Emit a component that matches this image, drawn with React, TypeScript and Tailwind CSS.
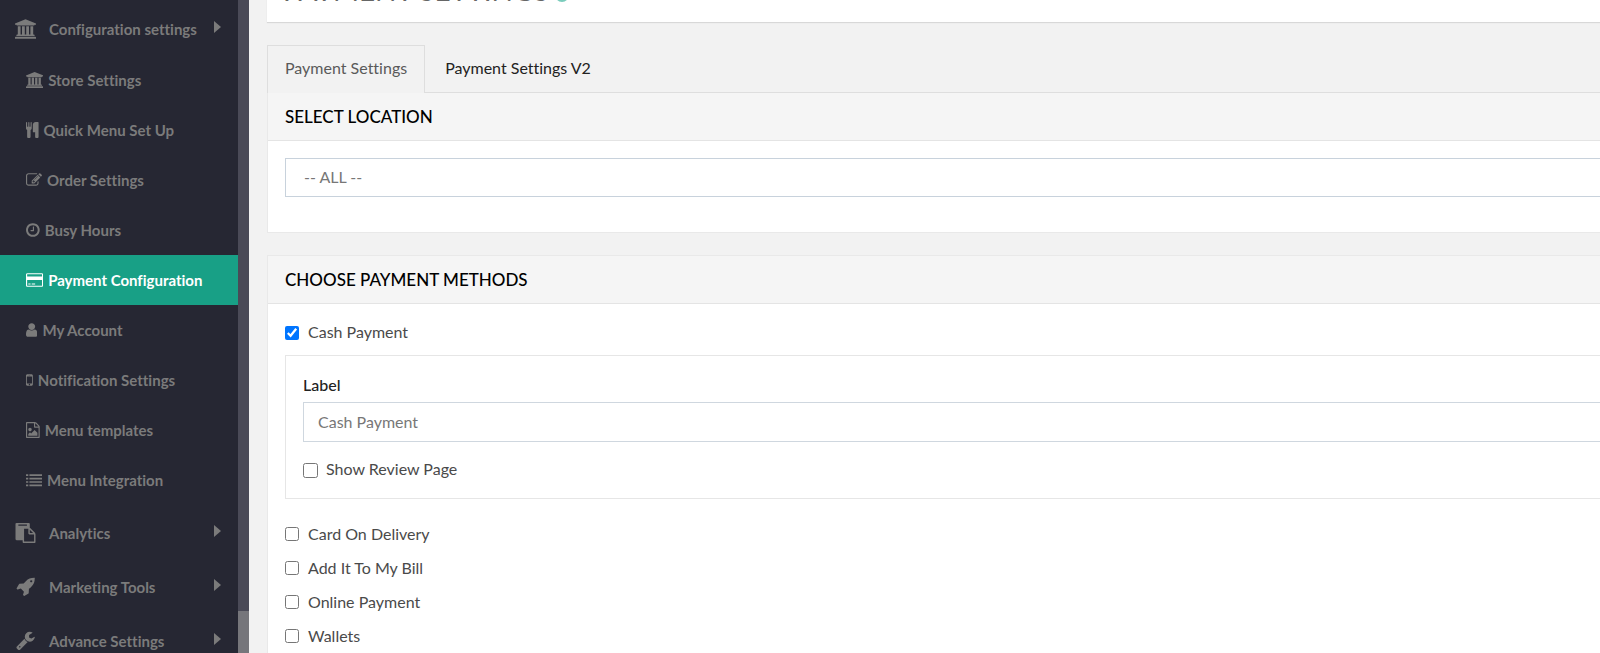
import { useState, type ReactNode } from 'react'

type IconProps = { box: string; d: string; className?: string }

function Icon({ box, d, className }: IconProps) {
  return (
    <svg xmlns="http://www.w3.org/2000/svg" viewBox={box} className={className} fill="currentColor" aria-hidden="true">
      <path d={d} />
    </svg>
  )
}

const BANK = {
  box: '0 0 1920 1792',
  d: 'M960 0l960 384v128h-128q0 26-20.5 45t-48.5 19h-1526q-28 0-48.5-19t-20.5-45h-128v-128zm-704 640h256v768h128v-768h256v768h128v-768h256v768h128v-768h256v768h59q28 0 48.5 19t20.5 45v64h-1664v-64q0-26 20.5-45t48.5-19h59v-768zm1595 960q28 0 48.5 19t20.5 45v128h-1920v-128q0-26 20.5-45t48.5-19h1782z',
}

const SUB_ITEMS = [
  { label: 'Store Settings', icon: BANK },
  {
    label: 'Quick Menu Set Up',
    icon: {
      box: '192 0 1408 1792',
      d: 'M832 64v640q0 61-35.5 111t-92.5 70v779q0 52-38 90t-90 38h-128q-52 0-90-38t-38-90v-779q-57-20-92.5-70t-35.5-111v-640q0-26 19-45t45-19 45 19 19 45v416q0 26 19 45t45 19 45-19 19-45v-416q0-26 19-45t45-19 45 19 19 45v416q0 26 19 45t45 19 45-19 19-45v-416q0-26 19-45t45-19 45 19 19 45zm768 0v1600q0 52-38 90t-90 38h-128q-52 0-90-38t-38-90v-512h-224q-13 0-22.5-9.5t-9.5-22.5v-800q0-132 94-226t226-94h256q26 0 45 19t19 45z',
    },
  },
  {
    label: 'Order Settings',
    icon: {
      box: '0 0 1792 1792',
      d: 'M888 1184l116-116-152-152-116 116v56h96v96h56zm440-720q-16-16-33 1l-350 350q-17 17-1 33t33-1l350-350q17-17 1-33zm80 594v190q0 119-84.5 203.5t-203.5 84.5h-832q-119 0-203.5-84.5t-84.5-203.5v-832q0-119 84.5-203.5t203.5-84.5h832q63 0 117 25 15 7 18 23 3 17-9 29l-49 49q-14 14-32 8-23-6-45-6h-832q-66 0-113 47t-47 113v832q0 66 47 113t113 47h832q66 0 113-47t47-113v-126q0-13 9-22l64-64q15-15 35-7t20 29zm-96-738l288 288-672 672h-288v-288zm444 132l-92 92-288-288 92-92q28-28 68-28t68 28l152 152q28 28 28 68t-28 68z',
    },
  },
  {
    label: 'Busy Hours',
    icon: {
      box: '128 0 1536 1792',
      d: 'M1024 544v448q0 14-9 23t-23 9h-320q-14 0-23-9t-9-23v-64q0-14 9-23t23-9h224v-352q0-14 9-23t23-9h64q14 0 23 9t9 23zm416 352q0-148-73-273t-198-198-273-73-273 73-198 198-73 273 73 273 198 198 273 73 273-73 198-198 73-273zm224 0q0 209-103 385.5t-279.5 279.5-385.5 103-385.5-103-279.5-279.5-103-385.5 103-385.5 279.5-279.5 385.5-103 385.5 103 279.5 279.5 103 385.5z',
    },
  },
  {
    label: 'Payment Configuration',
    active: true,
    icon: {
      box: '0 0 1920 1792',
      d: 'M1760 128q66 0 113 47t47 113v1216q0 66-47 113t-113 47h-1600q-66 0-113-47t-47-113v-1216q0-66 47-113t113-47h1600zm-1600 128q-13 0-22.5 9.5t-9.5 22.5v224h1664v-224q0-13-9.5-22.5t-22.5-9.5h-1600zm1600 1280q13 0 22.5-9.5t9.5-22.5v-608h-1664v608q0 13 9.5 22.5t22.5 9.5h1600zm-1504-128v-128h256v128h-256zm384 0v-128h384v128h-384z',
    },
  },
  {
    label: 'My Account',
    icon: {
      box: '256 0 1280 1792',
      d: 'M1536 1399q0 109-62.5 187t-150.5 78h-854q-88 0-150.5-78t-62.5-187q0-85 8.5-160.5t31.5-152 58.5-131 94-89 134.5-34.5q131 128 313 128t313-128q76 0 134.5 34.5t94 89 58.5 131 31.5 152 8.5 160.5zm-256-887q0 159-112.5 271.5t-271.5 112.5-271.5-112.5-112.5-271.5 112.5-271.5 271.5-112.5 271.5 112.5 112.5 271.5z',
    },
  },
  {
    label: 'Notification Settings',
    icon: {
      box: '512 0 768 1792',
      d: 'M976 1408q0-33-23.5-56.5t-56.5-23.5-56.5 23.5-23.5 56.5 23.5 56.5 56.5 23.5 56.5-23.5 23.5-56.5zm208-160v-704q0-13-9.5-22.5t-22.5-9.5h-512q-13 0-22.5 9.5t-9.5 22.5v704q0 13 9.5 22.5t22.5 9.5h512q13 0 22.5-9.5t9.5-22.5zm-192-848q0-16-16-16h-160q-16 0-16 16t16 16h160q16 0 16-16zm288-16v1024q0 52-38 90t-90 38h-512q-52 0-90-38t-38-90v-1024q0-52 38-90t90-38h512q52 0 90 38t38 90z',
    },
  },
  {
    label: 'Menu templates',
    icon: {
      box: '128 0 1536 1792',
      d: 'M1596 380q28 28 48 76t20 88v1152q0 40-28 68t-68 28h-1344q-40 0-68-28t-28-68v-1600q0-40 28-68t68-28h896q40 0 88 20t76 48zm-444-244v376h376q-10-29-22-41l-313-313q-12-12-41-22zm384 1528v-1024h-416q-40 0-68-28t-28-68v-416h-768v1536h1280zm-128-448v320h-1024v-192l192-192 128 128 384-384zm-832-192q-80 0-136-56t-56-136 56-136 136-56 136 56 56 136-56 136-136 56z',
    },
  },
  {
    label: 'Menu Integration',
    icon: {
      box: '0 0 1792 1792',
      d: 'M0 256h256v192H0zM0 640h256v192H0zM0 1024h256v192H0zM0 1408h256v192H0zM384 256h1408v192H384zM384 640h1408v192H384zM384 1024h1408v192H384zM384 1408h1408v192H384z',
    },
  },
]

const BOTTOM_ITEMS = [
  {
    label: 'Analytics',
    icon: {
      box: '0 0 1792 1792',
      d: 'M768 1664h896v-640h-416q-40 0-68-28t-28-68v-416h-384v1152zm256-1440v-64q0-13-9.5-22.5t-22.5-9.5h-704q-13 0-22.5 9.5t-9.5 22.5v64q0 13 9.5 22.5t22.5 9.5h704q13 0 22.5-9.5t9.5-22.5zm256 672h299l-299-299v299zm512 128v672q0 40-28 68t-68 28h-960q-40 0-68-28t-28-68v-160h-544q-40 0-68-28t-28-68v-1344q0-40 28-68t68-28h1088q40 0 68 28t28 68v328q21 13 36 28l408 408q28 28 48 76t20 88z',
    },
  },
  {
    label: 'Marketing Tools',
    icon: {
      box: '-64 64 1792 1792',
      d: 'M1440 448q0-40-28-68t-68-28-68 28-28 68 28 68 68 28 68-28 28-68zm224-288q0 249-75.5 430.5t-253.5 360.5q-81 80-195 176l-20 379q-2 16-16 26l-384 224q-7 4-16 4-12 0-23-9l-64-64q-13-14-8-32l85-276-281-281-276 85q-3 1-9 1-14 0-23-9l-64-64q-17-19-5-39l224-384q10-14 26-16l379-20q96-114 176-195 188-187 358-258t431-71q14 0 24 9.5t10 22.5z',
    },
  },
  {
    label: 'Advance Settings',
    icon: {
      box: '0 64 1792 1792',
      d: 'M448 1472q0-26-19-45t-45-19-45 19-19 45 19 45 45 19 45-19 19-45zm644-420l-682 682q-37 37-90 37-52 0-91-37l-106-108q-38-36-38-90 0-53 38-91l681-681q39 98 114.5 173.5t173.5 114.5zm634-435q0 39-23 106-47 134-164.5 217.5t-258.5 83.5q-185 0-316.5-131.5t-131.5-316.5 131.5-316.5 316.5-131.5q58 0 121.5 16.5t107.5 46.5q16 11 16 28t-16 28l-293 169v224l193 107q5-3 79-48.5t135.5-81 70.5-35.5q15 0 23.5 10t8.5 25z',
    },
  },
]

const METHODS = ['Card On Delivery', 'Add It To My Bill', 'Online Payment', 'Wallets']

function ParentItem({ label, icon }: { label: string; icon: { box: string; d: string } }) {
  return (
    <a href="#" className="flex h-[54px] items-center pt-[2px] pl-[15px] pr-[17px]">
      <Icon {...icon} className="h-5 w-[21px] shrink-0" />
      <span className="ml-[13px] flex-1">{label}</span>
      <svg viewBox="0 0 7 12" className="mb-1 h-3 w-[7px]" fill="currentColor" aria-hidden="true">
        <path d="M0 0l7 6-7 6z" />
      </svg>
    </a>
  )
}

function Panel({ title, className, children }: { title: string; className: string; children: ReactNode }) {
  return (
    <section className={`border-l border-[#e9e9e9] bg-white ${className}`}>
      <h2 className="h-12 border-b border-[#e4e4e4] bg-[#f5f5f5] pl-[17px] text-[17px] leading-[48px] font-medium text-black">{title}</h2>
      {children}
    </section>
  )
}

export default function App() {
  const [cash, setCash] = useState(true)

  return (
    <div className="flex h-screen overflow-hidden bg-[#f2f2f2] font-['Lato',sans-serif] text-base text-[#4a4a4a] [font-variant-ligatures:none]">

      {/* Sidebar */}
      <aside className="flex w-[249px] shrink-0 bg-[#262733]">
        <nav className="flex-1 overflow-hidden pt-px text-[15px] font-bold text-[#7b7b7b]">
          <ParentItem label="Configuration settings" icon={BANK} />
          {SUB_ITEMS.map((item) => (
            <a
              key={item.label}
              href="#"
              className={`flex h-[50px] items-center gap-[5px] pl-[26px] ${item.active ? 'bg-[#18a086] text-white' : ''}`}
            >
              <Icon {...item.icon} className="h-4 w-auto" />
              <span>{item.label}</span>
            </a>
          ))}
          {BOTTOM_ITEMS.map((item) => (
            <ParentItem key={item.label} {...item} />
          ))}
        </nav>
        {/* scrollbar */}
        <div className="flex w-[11px] flex-col justify-end bg-[#4a4a57]">
          <div className="h-[42px] bg-[#76767b]" />
        </div>
      </aside>

      <main className="min-w-0 flex-1 overflow-hidden pl-[18px]">
        <header className="-mt-[30px] flex h-[52px] items-start gap-[6px] bg-white pl-4 shadow-[0_1px_1px_#d8d8d8]">
          <h1 className="text-[28px] leading-10 text-[#666]">PAYMENT SETTINGS</h1>
          <span className="mt-[18px] size-[14px] rounded-full bg-[#7accbc]" />
        </header>

        {/* Tabs */}
        <div role="tablist" className="mt-[23px] flex h-12 border-b border-[#dedede]">
          <button role="tab" aria-selected="true" className="-mb-px border border-b-0 border-[#dedede] bg-[#f2f2f2] px-[17px] pb-[3px] text-[#5a5a5a]">
            Payment Settings
          </button>
          <button role="tab" aria-selected="false" className="px-5 pb-[2px] text-[#222]">
            Payment Settings V2
          </button>
        </div>

        <Panel title="SELECT LOCATION" className="border-b pb-[35px]">
          <div className="pt-[17px] pl-[17px]">
            <select aria-label="Location" className="block h-[39px] w-full appearance-none border border-r-0 border-[#c8d2dc] bg-white pb-[2px] pl-[18px] text-[#777]">
              <option>-- ALL --</option>
            </select>
          </div>
        </Panel>

        <Panel title="CHOOSE PAYMENT METHODS" className="mt-[22px] border-t">
          <div className="pt-3 pl-[17px]">
            <label className="flex h-[34px] items-center gap-[9px]">
              <input type="checkbox" checked={cash} onChange={(e) => setCash(e.target.checked)} className="size-[14px]" />
              <span className="pb-[2px]">Cash Payment</span>
            </label>
            <div className="mt-[5px] mb-[18px] border border-r-0 border-[#e6e6e6] pt-4 pb-[11px] pl-[17px]">
              <label htmlFor="cash-label" className="block leading-[26px] font-medium text-[#222]">Label</label>
              <input
                id="cash-label"
                type="text"
                defaultValue="Cash Payment"
                className="mt-1 block h-10 w-full border border-r-0 border-[#cfd7df] pb-[2px] pl-[14px] text-[#777]"
              />
              <label className="mt-[11px] flex h-[34px] items-center gap-2">
                <input type="checkbox" className="size-[15px]" />
                <span className="pb-[2px]">Show Review Page</span>
              </label>
            </div>
            {METHODS.map((m) => (
              <label key={m} className="flex h-[34px] items-center gap-[9px]">
                <input type="checkbox" className="size-[14px]" />
                <span className="pb-px">{m}</span>
              </label>
            ))}
          </div>
        </Panel>
      </main>
    </div>
  )
}
